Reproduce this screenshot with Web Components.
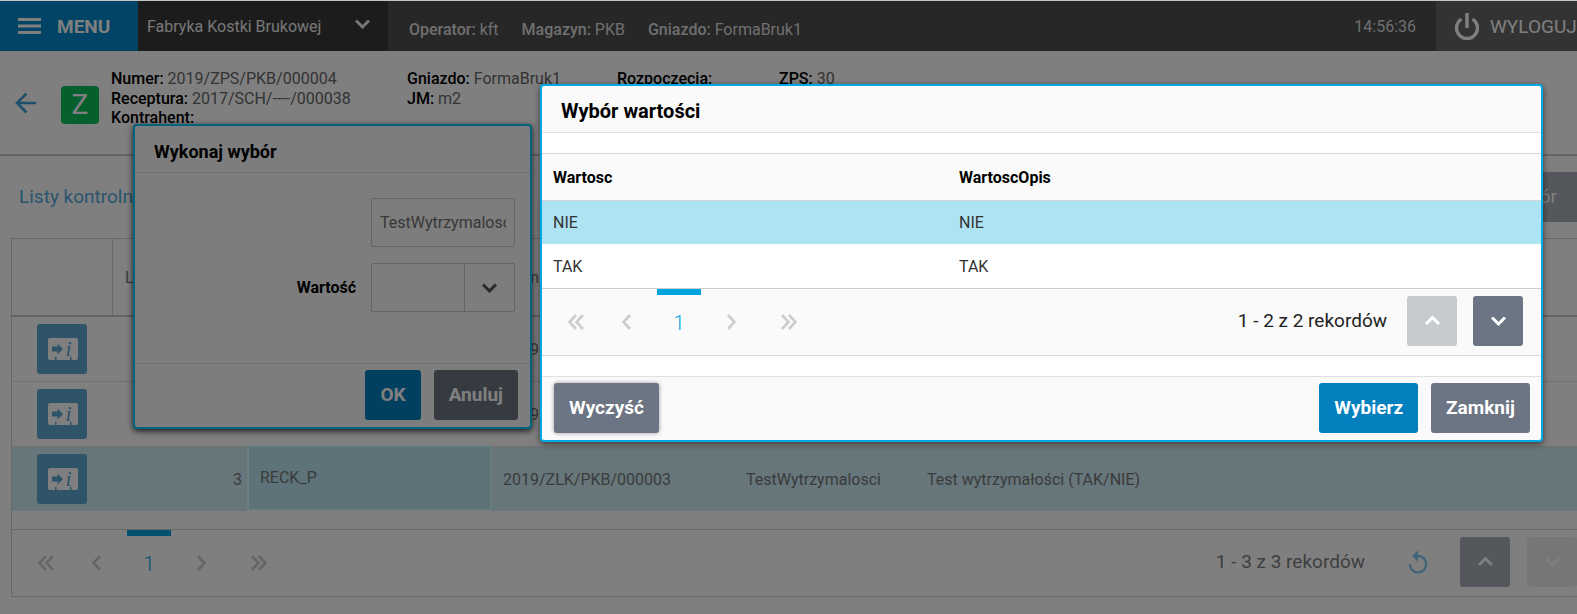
<!DOCTYPE html>
<html lang="pl"><head><meta charset="utf-8"><title>Wybór wartości</title>
<style>
html,body{margin:0;padding:0;background:#fff;font-family:Roboto,"Liberation Sans",sans-serif;}
</style></head><body>
<x-app>
  <x-topbar></x-topbar>
  <x-info></x-info>
  <x-toolbar></x-toolbar>
  <x-grid>
    <x-row slot="head" head>
      <x-cell line></x-cell>
      <x-cell style="padding-left:12px">Lp</x-cell>
      <x-cell></x-cell>
      <x-cell style="padding-left:2px">Zmian</x-cell>
      <x-cell></x-cell><x-cell></x-cell>
    </x-row>
    <x-row><x-cell center><x-icon-btn></x-icon-btn></x-cell><x-cell></x-cell><x-cell></x-cell><x-cell>2019</x-cell><x-cell></x-cell><x-cell></x-cell></x-row>
    <x-row><x-cell center><x-icon-btn></x-icon-btn></x-cell><x-cell></x-cell><x-cell></x-cell><x-cell>2019</x-cell><x-cell></x-cell><x-cell></x-cell></x-row>
    <x-row selected><x-cell center><x-icon-btn></x-icon-btn></x-cell><x-cell end>3</x-cell><x-cell focused>RECK_P</x-cell><x-cell>2019/ZLK/PKB/000003</x-cell><x-cell>TestWytrzymalosci</x-cell><x-cell>Test wytrzymałości (TAK/NIE)</x-cell></x-row>
    <x-pager slot="pager" records="1 - 3 z 3 rekordów" up="#a8aeb8" down="#eceded" style="--rec-color:#808080">
      <x-glyph slot="extra" name="replay" size="28" color="#80c8f0" style="margin:0 28px 0 39px"></x-glyph>
    </x-pager>
  </x-grid>

  <x-modal tone="under" style="left:133px;top:123px;width:399px;height:305px;">
    <span slot="title">Wykonaj wybór</span>
    <x-form></x-form>
    <x-btn slot="footer" kind="blue">OK</x-btn>
    <x-btn slot="footer" kind="grey" style="margin-left:13px">Anuluj</x-btn>
  </x-modal>

  <x-overlay></x-overlay>

  <x-modal tone="top" style="left:540px;top:83px;width:1003px;height:358px;--title:20px">
    <span slot="title">Wybór wartości</span>
    <x-values></x-values>
    <x-btn slot="start" kind="grey" raised>Wyczyść</x-btn>
    <x-btn slot="footer" kind="blue">Wybierz</x-btn>
    <x-btn slot="footer" kind="grey" style="margin-left:13px">Zamknij</x-btn>
  </x-modal>
</x-app>
<script>
const ICONS={
  menu:'<path d="M0 1.5H23M0 8H23M0 14.500H23" fill="none" stroke="currentColor" stroke-width="3"/>',
  down:'<path d="M1 1.500 7.500 8 14 1.500" fill="none" stroke="currentColor" stroke-width="3"/>',
  up:'<path d="M1 8 7.500 1.500 14 8" fill="none" stroke="currentColor" stroke-width="3"/>',
  left:'<path d="M8 1 1.500 8 8 15" fill="none" stroke="currentColor" stroke-width="2.600"/>',
  right:'<path d="M1 1 7.500 8 1 15" fill="none" stroke="currentColor" stroke-width="2.600"/>',
  dleft:'<path d="M8 1 1.500 8 8 15M15 1 8.500 8 15 15" fill="none" stroke="currentColor" stroke-width="2.600"/>',
  dright:'<path d="M1 1 7.500 8 1 15M8 1 14.500 8 8 15" fill="none" stroke="currentColor" stroke-width="2.600"/>',
  replay:'<path fill="currentColor" d="M12 5V1L7 6l5 5V7c3.31 0 6 2.69 6 6s-2.690 6-6 6-6-2.690-6-6H4c0 4.420 3.580 8 8 8s8-3.580 8-8-3.580-8-8-8z"/>',
  power:'<path d="M6.500 6.100A10.500 10.500 0 1 0 17.500 6.100M12 0V15" fill="none" stroke="currentColor" stroke-width="3.400"/>',
  back:'<path d="M11.500 1.500 2 11l9.500 9.500M2 11H21" fill="none" stroke="currentColor" stroke-width="2.600"/>'
};
const BOX={menu:[23,16],down:[15,10],up:[15,10],left:[9,16],right:[9,16],dleft:[16,16],dright:[16,16],replay:[24,24],power:[24,27],back:[22,22]};
const def=(name,css,html)=>customElements.define(name,class extends HTMLElement{
  constructor(){super();this.attachShadow({mode:'open'}).innerHTML='<style>'+css+'</style>'+(typeof html==='function'?html(this):html);}
});
customElements.define('x-glyph',class extends HTMLElement{
  constructor(){super();this.attachShadow({mode:'open'});}
  connectedCallback(){
    const n=this.getAttribute('name'),[w,h]=BOX[n],s=+this.getAttribute('size')||0;
    const W=s?s:w,H=s?s*h/w:h;
    this.shadowRoot.innerHTML='<style>:host{display:inline-flex;flex:none;color:'+(this.getAttribute('color')||'inherit')+'}svg{display:block}</style><svg width="'+W+'" height="'+H+'" viewBox="0 0 '+w+' '+h+'">'+ICONS[n]+'</svg>';
  }
});
def('x-app',':host{display:block;position:relative;width:1577px;height:614px;overflow:hidden;background:#fff;border-top:1px solid #c4c4c4;box-sizing:border-box}','<slot></slot>');
def('x-overlay',':host{display:block;position:absolute;inset:0;background:rgba(0,0,0,.5)}','');
def('x-topbar',`:host{display:flex;height:50px;background:#4e4e4e;color:#fff;font-size:16px;align-items:stretch}
 .menu{width:138px;background:#0288cc;display:flex;align-items:center;padding-left:18px;box-sizing:border-box;gap:16px;font-size:19px;font-weight:700}
 .firm{width:250px;background:#383838;display:flex;align-items:center;padding:0 18px 0 9px;box-sizing:border-box;justify-content:space-between;color:#eee;font-size:16px}
 .firm x-glyph{margin-top:-4px}
 .nav{display:flex;align-items:center;gap:23px;padding:6px 0 0 21px;color:#dedede;font-size:16px;flex:1}
 b{font-weight:500}.time{display:flex;align-items:center;color:#dcdcdc;font-size:16px;padding-right:20px}
 .out{width:141px;background:#666;display:flex;align-items:center;gap:11px;padding-left:19px;box-sizing:border-box;font-size:19px;white-space:nowrap;overflow:hidden}`,
 `<div class="menu"><x-glyph name="menu"></x-glyph><span>MENU</span></div>
  <div class="firm"><span>Fabryka Kostki Brukowej</span><x-glyph name="down"></x-glyph></div>
  <div class="nav"><span><b>Operator:</b> kft</span><span><b>Magazyn:</b> PKB</span><span><b>Gniazdo:</b> FormaBruk1</span></div>
  <div class="time">14:56:36</div>
  <div class="out"><x-glyph name="power"></x-glyph><span>WYLOGUJ</span></div>`);
def('x-info',`:host{display:flex;height:105px;box-sizing:border-box;border-bottom:2px solid #c8c8c8;background:#fff;font-size:16px;line-height:19.5px;color:#666}
 b{color:#000;font-weight:500}
 .back{width:61px;padding:41px 0 0 15px;box-sizing:border-box;color:#3f9fd8}
 .z{width:38px;height:38px;margin-top:35px;background:#0cc05c;border-radius:4px;color:#fff;font-size:28px;line-height:38px;text-align:center;flex:none}
 .c{padding-top:18px;box-sizing:border-box;white-space:nowrap}
 .a{width:308px;padding-left:12px}.d{width:210px}.e{width:162px}`,
 `<div class="back"><x-glyph name="back"></x-glyph></div><div class="z">Z</div>
  <div class="c a"><div><b>Numer:</b> 2019/ZPS/PKB/000004</div><div><b>Receptura:</b> 2017/SCH/----/000038</div><div><b>Kontrahent:</b></div></div>
  <div class="c d"><div><b>Gniazdo:</b> FormaBruk1</div><div><b>JM:</b> m2</div></div>
  <div class="c e"><div><b>Rozpoczecia:</b></div></div>
  <div class="c"><div><b>ZPS:</b> 30</div></div>`);
def('x-toolbar',`:host{display:flex;height:82px;align-items:flex-start;justify-content:space-between;padding:16px 0 0 19px;box-sizing:border-box;background:#fff}
 .t{font-size:19px;color:#55aadc;line-height:50px}
 .b{height:50px;width:100px;background:#a8aeb8;color:#fff;font-size:19px;line-height:50px;text-align:right;padding-right:20px;box-sizing:border-box;overflow:hidden;white-space:nowrap}`,
 `<div class="t">Listy kontrolne</div><div class="b">Wybór</div>`);
def('x-grid',`:host{display:block;margin-left:11px;border:solid #d0d0d0;border-width:1px 0 1px 1px;height:359px;box-sizing:border-box;background:#fff}
 .gap{height:18px;border-bottom:1px solid #ccc}`,
 `<slot name="head"></slot><slot></slot><div class="gap"></div><slot name="pager"></slot>`);
def('x-row',`:host{display:grid;grid-template-columns:101px 134px 245px 243px 181px 1fr;height:65px;border-bottom:1px solid #e0e0e0;box-sizing:border-box;font-size:16px;color:#777}
 :host([head]){height:78px;border-bottom:2px solid #c8c8c8}
 :host([selected]){height:64px;border-bottom:0;background:#cdedf5}`,'<slot></slot>');
def('x-cell',`:host{display:flex;align-items:center;padding:0 11px;box-sizing:border-box;white-space:nowrap;min-width:0}
 :host([center]){justify-content:center;padding:0 2px 0 0}
 :host([end]){justify-content:flex-end;padding:0 5px 0 0}
 :host([line]){border-right:1px solid #d0d0d0}
 :host([focused]){background:#bbe5f2;border:2px solid #d6ffff;margin-top:-2px;padding:0 11px 2px}`,'<slot></slot>');
def('x-icon-btn',`:host{display:block;width:50px;height:50px;background:#5ea6d0;border-radius:3px;position:relative}
 svg{display:block;position:absolute;left:11px;top:14px}
 span{position:absolute;left:29px;top:12px;font:italic 22px/26px "Liberation Serif",serif;color:#5ea6d0}`,
 `<svg width="30" height="22" viewBox="0 0 30 22"><path fill="#fff" d="M2 0H28a2 2 0 0 1 2 2V20a2 2 0 0 1-2 2H23.500V19h-1.500v3H8.500V19H7v3H2a2 2 0 0 1-2-2V2a2 2 0 0 1 2-2z"/><path fill="#5ea6d0" d="M4 8.500H9.500V5.500L15 11 9.500 16.500V13.500H4z"/></svg><span>i</span>`);
def('x-pager',`:host{display:flex;height:66px;align-items:center;background:#fff;box-sizing:border-box}
 :host([modal]){background:#fafafa}
 .nav{display:grid;grid-template-columns:50px 51px 54px 51px 64px;margin-left:9px;height:100%;flex:none}
 .nav>div{display:flex;align-items:center;justify-content:center;color:#ccc;position:relative}
 .nav .cur{color:#00a5e0;font-size:20px;font-weight:300}
 .cur::before{content:"";position:absolute;left:5px;right:5px;top:0;height:6px;background:#00a5e0}
 .cur span{position:relative;top:1px}
 .rec{margin-left:auto;margin-right:var(--rec-gap,0);margin-bottom:4px;font-size:19px;color:var(--rec-color,#222);white-space:nowrap}
 .sq{width:50px;height:50px;margin-bottom:2px;border-radius:3px;display:flex;align-items:center;justify-content:center;color:#fff;flex:none}
 .down{margin-left:var(--sq-gap,17px)}`,
 h=>`<div class="nav"><div><x-glyph name="dleft"></x-glyph></div><div><x-glyph name="left"></x-glyph></div><div class="cur"><span>1</span></div><div><x-glyph name="right"></x-glyph></div><div><x-glyph name="dright"></x-glyph></div></div>
 <span class="rec">${h.getAttribute('records')}</span><slot name="extra"></slot>
 <div class="sq" style="background:${h.getAttribute('up')}"><x-glyph name="up"></x-glyph></div><div class="sq down" style="background:${h.getAttribute('down')}"><x-glyph name="down"></x-glyph></div>`);
def('x-modal',`:host{display:flex;flex-direction:column;position:absolute;box-sizing:border-box;border:2px solid #00a9e4;border-radius:4px;background:#fafafa;box-shadow:0 2px 6px rgba(0,0,0,.55);color:#000}
 :host([tone=under]){border-color:#00c8ff;box-shadow:0 2px 6px rgba(0,0,0,.8)}
 .h{flex:none;height:47px;padding:4px 0 0 19px;display:flex;align-items:center;font-size:var(--title,18px);font-weight:700;border-bottom:1px solid #e0e0e0;color:#000;box-sizing:border-box}
 .b{flex:1;min-height:0;background:#fff}
 :host([tone=under]) .b{background:#fafafa}
 .f{flex:none;height:64px;display:flex;align-items:center;padding:0 11px 2px 12px;border-top:1px solid #e0e0e0;box-sizing:border-box}
 :host([tone=under]) .f{padding:0 12px 2px 11px}
 .sp{flex:1}`,
 `<div class="h"><slot name="title"></slot></div><div class="b"><slot></slot></div><div class="f"><slot name="start"></slot><span class="sp"></span><slot name="footer"></slot></div>`);
def('x-btn',`:host{display:inline-flex;height:50px;align-items:center;padding:0 15px;box-sizing:border-box;border-radius:3px;color:#fff;font-size:19px;font-weight:700;flex:none}
 :host([kind=blue]){background:#0480be}
 :host([kind=grey]){background:#6c7583}
 :host([raised]){box-shadow:0 0 4px rgba(0,0,0,.4)}`,'<slot></slot>');
def('x-form',`:host{display:block;height:100%;font-size:16px}
 .row{display:flex;justify-content:flex-end;align-items:center;padding-right:15px;height:49px;margin-top:25px}
 .row+.row{margin-top:16px}
 .in{width:144px;height:49px;border:1px solid #c8c8c8;border-radius:2px;box-sizing:border-box;padding:0 8px;display:flex;align-items:center;color:#707070;font-size:16px;overflow:hidden;white-space:nowrap}
 .in span{display:block;overflow:hidden;width:100%}
 .sel{padding:0;justify-content:flex-end}
 .arr{width:50px;height:100%;box-sizing:border-box;border-left:1px solid #c8c8c8;display:flex;align-items:center;justify-content:center;color:#555}
 label{font-weight:700;font-size:16px;color:#000;margin-right:15px}`,
 `<div class="row"><div class="in"><span>TestWytrzymalosci</span></div></div>
  <div class="row"><label>Wartość</label><div class="in sel"><div class="arr"><x-glyph name="down"></x-glyph></div></div></div>`);
def('x-values',`:host{display:flex;flex-direction:column;height:100%;background:#fff}
 .g{height:20px;flex:none}
 .r{display:grid;grid-template-columns:406px 1fr;align-items:center;padding-left:11px;height:44px;flex:none;color:#333;font-size:16px}
 .th{height:48px;background:#fafafa;border-top:1px solid #d4d4d4;border-bottom:1px solid #d4d4d4;font-weight:700;color:#000;box-sizing:border-box}
 .sel{background:#ade3f3;height:43px}
 .pg{border-top:1px solid #ccc;border-bottom:1px solid #d8d8d8}`,
 `<div class="g"></div><div class="r th"><span>Wartosc</span><span>WartoscOpis</span></div>
  <div class="r sel"><span>NIE</span><span>NIE</span></div><div class="r"><span>TAK</span><span>TAK</span></div>
  <div class="pg"><x-pager modal records="1 - 2 z 2 rekordów" up="#c7cbd0" down="#6c7583" style="padding-right:18px;--rec-gap:20px;--sq-gap:16px"></x-pager></div>`);
</script>
</body></html>
